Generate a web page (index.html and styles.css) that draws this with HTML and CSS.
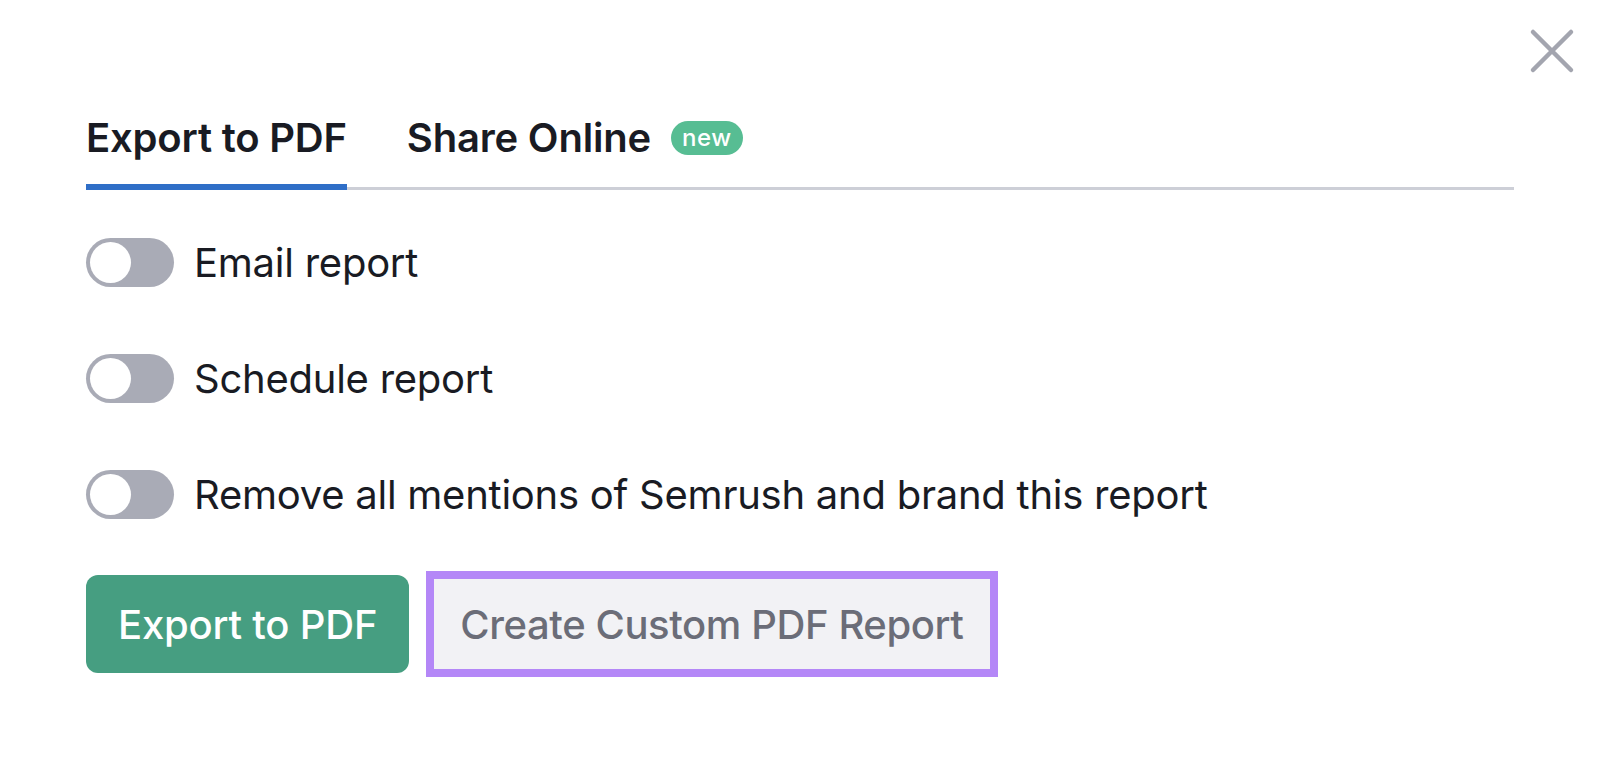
FILE: index.html
```html
<!DOCTYPE html>
<html lang="en">
<head>
<meta charset="utf-8">
<title>Export</title>
<link rel="stylesheet" href="styles.css">
</head>
<body>
<div class="dialog">
  <button class="close" aria-label="Close">
    <svg width="46" height="46" viewBox="0 0 46 46"><path d="M4 4 L42 42 M42 4 L4 42" stroke="#a3a5af" stroke-width="4.5" stroke-linecap="round" fill="none"/></svg>
  </button>
  <div class="tabs">
    <div class="tab active">Export to PDF</div>
    <div class="tab">Share Online <span class="badge">new</span></div>
  </div>
  <div class="options">
    <div class="row"><span class="toggle"><span class="knob"></span></span><span class="label">Email report</span></div>
    <div class="row"><span class="toggle"><span class="knob"></span></span><span class="label">Schedule report</span></div>
    <div class="row"><span class="toggle"><span class="knob"></span></span><span class="label">Remove all mentions of Semrush and brand this report</span></div>
  </div>
  <div class="actions">
    <button class="btn primary">Export to PDF</button>
    <button class="btn secondary">Create Custom PDF Report</button>
  </div>
</div>
</body>
</html>
```
FILE: styles.css
```css
html, body {
  margin: 0;
  padding: 0;
  background: #ffffff;
}
body {
  font-family: Inter, "Noto Sans", sans-serif;
  color: #191b23;
}
.dialog {
  position: relative;
  padding: 114px 86px 0 86px;
  height: 762px;
  box-sizing: border-box;
}
.close {
  position: absolute;
  top: 28px;
  right: 25px;
  background: none;
  border: 0;
  padding: 0;
  cursor: pointer;
}
.close svg { display: block; }
.tabs {
  display: flex;
  gap: 60px;
  border-bottom: 3px solid #cdcfd7;
}
.tab {
  display: flex;
  align-items: center;
  gap: 20px;
  font-size: 40px;
  font-weight: 600;
  line-height: 48px;
  padding-bottom: 22px;
  margin-bottom: -3px;
  border-bottom: 6px solid transparent;
  letter-spacing: -0.2px;
}
.tab.active {
  border-bottom-color: #2f6ec7;
}
.badge {
  display: inline-block;
  background: #57bd93;
  color: #ffffff;
  font-size: 24px;
  font-weight: 500;
  line-height: 33px;
  padding: 0 11px 1px;
  border-radius: 17px;
  letter-spacing: 0.6px;
}
.options {
  display: flex;
  flex-direction: column;
  gap: 68px;
  padding-top: 48px;
}
.row {
  display: flex;
  align-items: center;
  gap: 20px;
  height: 48px;
}
.toggle {
  width: 88px;
  height: 49px;
  border-radius: 25px;
  background: #a9abb6;
  display: flex;
  align-items: center;
  padding-left: 4px;
  box-sizing: border-box;
  flex: none;
}
.knob {
  width: 41px;
  height: 41px;
  border-radius: 50%;
  background: #ffffff;
}
.label {
  font-size: 40px;
  font-weight: 400;
  letter-spacing: -0.25px;
}
.actions {
  display: flex;
  align-items: center;
  gap: 25px;
  padding-top: 57px;
}
.btn {
  font-family: Inter, "Noto Sans", sans-serif;
  font-size: 40px;
  font-weight: 500;
  border: 0;
  cursor: pointer;
  letter-spacing: -0.2px;
}
.primary {
  background: #469e81;
  color: #ffffff;
  height: 98px;
  padding: 0 32px;
  border-radius: 12px;
}
.secondary {
  background: #f2f2f5;
  color: #6b6d78;
  height: 90px;
  padding: 0 26px;
  border-radius: 0;
  outline: 8px solid #b487f7;
  letter-spacing: -0.4px;
}
```
